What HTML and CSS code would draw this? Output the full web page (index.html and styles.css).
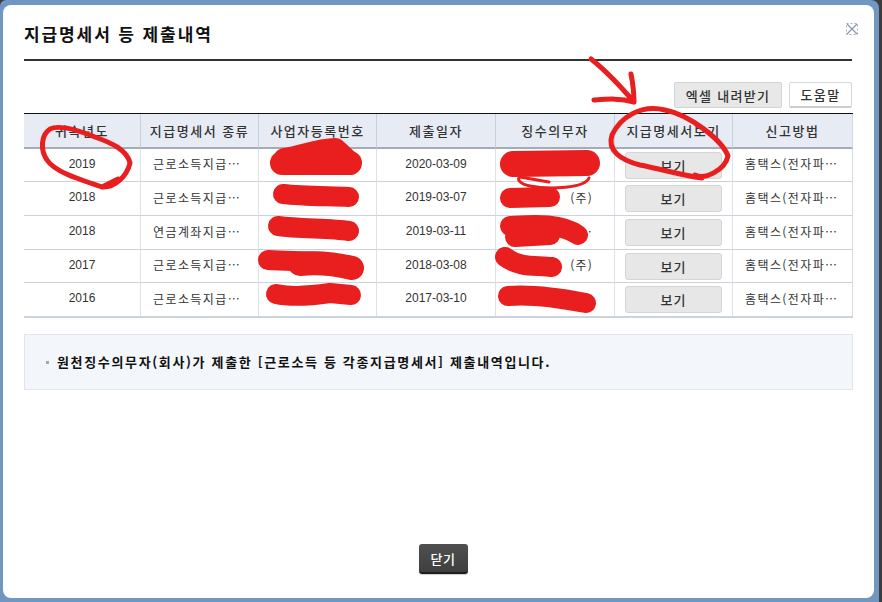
FILE: index.html
```html
<!DOCTYPE html>
<html lang="ko">
<head>
<meta charset="utf-8">
<title>지급명세서 등 제출내역</title>
<link rel="stylesheet" href="styles.css">
</head>
<body>
<div class="frame">
  <div class="modal">
    <header class="head">
      <h1 class="title">지급명세서 등 제출내역</h1>
      <svg class="close-icon" width="12" height="12" viewBox="0 0 12 12" aria-hidden="true">
        <rect class="close-box" x="0.5" y="0.5" width="11" height="11"/>
        <path class="close-x" d="M1 1L11 11M11 1L1 11"/>
      </svg>
    </header>
    <div class="toolbar">
      <button class="btn btn-grey">엑셀 내려받기</button>
      <button class="btn btn-white">도움말</button>
    </div>
    <table class="grid">
      <colgroup>
        <col class="c1"><col class="c2"><col class="c3"><col class="c4"><col class="c5"><col class="c6"><col class="c7">
      </colgroup>
      <thead>
        <tr><th>귀속년도</th><th>지급명세서 종류</th><th>사업자등록번호</th><th>제출일자</th><th>징수의무자</th><th>지급명세서보기</th><th>신고방법</th></tr>
      </thead>
      <tbody>
        <tr class="r33"><td class="num">2019</td><td class="txt">근로소득지급…</td><td></td><td class="num">2020-03-09</td><td></td><td class="act"><button class="view">보기</button></td><td class="txt">홈택스(전자파…</td></tr>
        <tr class="r34"><td class="num">2018</td><td class="txt">근로소득지급…</td><td></td><td class="num">2019-03-07</td><td class="payer">(주)</td><td class="act"><button class="view">보기</button></td><td class="txt">홈택스(전자파…</td></tr>
        <tr class="r34"><td class="num">2018</td><td class="txt">연금계좌지급…</td><td></td><td class="num">2019-03-11</td><td class="payer">…</td><td class="act"><button class="view">보기</button></td><td class="txt">홈택스(전자파…</td></tr>
        <tr class="r33"><td class="num">2017</td><td class="txt">근로소득지급…</td><td></td><td class="num">2018-03-08</td><td class="payer">(주)</td><td class="act"><button class="view">보기</button></td><td class="txt">홈택스(전자파…</td></tr>
        <tr class="r33"><td class="num">2016</td><td class="txt">근로소득지급…</td><td></td><td class="num">2017-03-10</td><td></td><td class="act"><button class="view">보기</button></td><td class="txt">홈택스(전자파…</td></tr>
      </tbody>
    </table>
    <div class="note"><span class="bullet"></span><p class="note-text">원천징수의무자(회사)가 제출한 [근로소득 등 각종지급명세서] 제출내역입니다.</p></div>
    <div class="foot"><button class="closebtn">닫기</button></div>
  </div>
</div>
<svg class="marks" width="882" height="602" viewBox="0 0 882 602" aria-hidden="true">
  <g class="thin">
    <path d="M118 179L102 187C115 188 127 176 130 163C127 150 112 143 95 137C80 131 60 124 50 129C41 135 40 150 47 160C54 171 75 178 102 187"/>
    <path d="M695 175C705 180 725 170 728 156C722 140 690 115 665 110C640 104 620 118 612 135C607 150 620 160 640 165C665 170 680 175 702 178"/>
    <path d="M591 59C605 70 622 88 634 102M631 74C633 84 634 94 634 102C620 98 608 99 594 100"/>
    <path class="hair" d="M549 182L520 177C516 179 520 184 530 186C550 190 585 188 589 178"/>
  </g>
  <g class="blob">
    <path class="w24" d="M282 163L350 163"/>
    <path class="w24" d="M285 160C300 158 318 150 335 150L349 163"/>
    <path class="w20" d="M283 194C300 196 320 196 349 197"/>
    <path class="w20" d="M278 226C300 229 330 228 349 231"/>
    <path class="w20" d="M268 260C285 261 300 261 320 262"/>
    <path class="w24" d="M300 264C320 262 335 264 352 268"/>
    <path class="w20" d="M276 294C290 297 310 296 330 293L351 295"/>
    <path class="w26" d="M513 164L587 163"/>
    <path class="w20" d="M510 198L550 197"/>
    <path class="w20" d="M510 226C530 225 560 222 578 235"/>
    <path class="w20" d="M515 237L550 235"/>
    <path class="w20" d="M505 257C520 268 535 265 552 267"/>
    <path class="w20" d="M508 296C530 294 560 298 586 303"/>
  </g>
</svg>
</body>
</html>
```
FILE: styles.css
```css
* { box-sizing: border-box; }
html, body { margin: 0; height: 100%; }
body {
  background: #3c3c3c;
  font-family: "Noto Sans CJK KR", "Liberation Sans", sans-serif;
  color: #333;
  width: 882px;
  height: 602px;
  overflow: hidden;
  position: relative;
}
.frame {
  width: 879px;
  height: 602px;
  background: #7096c2;
  padding: 5px 5px 4px 3px;
  border-radius: 6px 8px 0 0;
}
.modal {
  height: 593px;
  background: #fff;
  border-radius: 8px;
  padding: 0 22px 0 21px;
  display: flex;
  flex-direction: column;
}
.head {
  height: 56px;
  border-bottom: 2px solid #333;
  position: relative;
  padding-top: 18px;
  flex: none;
}
.title {
  margin: 0;
  font-size: 17px;
  line-height: 22px;
  font-weight: 700;
  letter-spacing: 1.9px;
  color: #111;
}
.close-icon { position: absolute; right: -6px; top: 18px; }
.close-box { fill: none; stroke: #a8adb8; stroke-width: 1; stroke-dasharray: 2 2; }
.close-x { stroke: #8d97ad; stroke-width: 1.3; fill: none; }
.toolbar {
  display: flex;
  justify-content: flex-end;
  gap: 7px;
  margin-top: 21px;
  height: 27px;
  flex: none;
}
.btn {
  font-family: inherit;
  font-size: 13px;
  font-weight: 500;
  letter-spacing: 1.3px;
  color: #333;
  height: 26px;
  padding: 0;
  border-radius: 2px;
  cursor: pointer;
}
.btn-grey { width: 108px; background: #e8e8e8; border: 1px solid #d4d4d4; }
.btn-white { width: 63px; background: #fff; border: 1px solid #d8d8d8; border-bottom: 2px solid #ccc; }
.grid {
  margin-top: 4px;
  width: 829px;
  flex: none;
  border-collapse: separate;
  border-spacing: 0;
  table-layout: fixed;
  border-top: 1px solid #111;
  border-bottom: 2px solid #ccd3de;
}
.c1 { width: 116px; }
.c2, .c3, .c6 { width: 118px; }
.c4, .c5 { width: 119px; }
.c7 { width: 121px; }
.grid th {
  height: 35px;
  padding: 0 0 1px;
  background: #e6ebf4;
  font-size: 13px;
  font-weight: 500;
  letter-spacing: 1.5px;
  color: #333;
  border-left: 1px solid #c8d0dc;
  border-bottom: 2px solid #a6acb5;
}
.grid th:first-child, .grid td:first-child { border-left: 0; }
.grid th:last-child, .grid td:last-child { border-right: 1px solid #d5dae2; }
.grid td {
  padding: 0;
  font-size: 12px;
  color: #333;
  border-left: 1px solid #dde1e8;
  border-bottom: 1px solid #ccd2dc;
  white-space: nowrap;
  overflow: hidden;
}
.grid tbody tr:last-child td { border-bottom: 0; }
.r34 td { height: 34px; }
.r33 td { height: 33px; }
.num { text-align: center; font-family: "Liberation Sans", sans-serif; padding-bottom: 3px !important; }
.txt { padding: 0 0 3px 12px !important; letter-spacing: 1.4px; }
.payer { text-align: right; padding: 0 21px 3px 0 !important; letter-spacing: 1.2px; }
.act { text-align: center; }
.view {
  display: block;
  margin: 0 0 0 10px;
  width: 97px;
  height: 27px;
  padding: 0;
  font-family: inherit;
  font-size: 13px;
  font-weight: 500;
  letter-spacing: 1px;
  color: #333;
  background: #e8e7e8;
  border: 1px solid #d5d5d5;
  border-radius: 3px;
  cursor: pointer;
}
.note {
  margin-top: 16px;
  width: 829px;
  height: 56px;
  flex: none;
  background: #f3f6fb;
  border: 1px solid #e1e6ee;
  display: flex;
  align-items: center;
  padding: 0 0 0 21px;
  gap: 8px;
}
.bullet { width: 3px; height: 3px; background: #a6a6a6; flex: none; }
.note-text {
  margin: 0;
  font-size: 13px;
  line-height: 16px;
  font-weight: 700;
  letter-spacing: 1.65px;
  color: #111;
  white-space: nowrap;
}
.foot {
  margin-top: 154px;
  display: flex;
  justify-content: center;
  flex: none;
  padding-left: 10px;
}
.closebtn {
  width: 49px;
  height: 30px;
  padding: 0;
  font-family: inherit;
  font-size: 13px;
  font-weight: 500;
  letter-spacing: .5px;
  color: #fff;
  background: linear-gradient(#505050, #3f3f3f);
  border: 0;
  border-bottom: 2px solid #1e1e1e;
  border-radius: 3px;
  box-shadow: 0 1px 1px #ccc;
  cursor: pointer;
}
.marks { position: absolute; left: 0; top: 0; pointer-events: none; }
.marks path { fill: none; stroke: #e91e1e; stroke-linecap: round; stroke-linejoin: round; }
.thin path { stroke-width: 5; }
.thin .hair { stroke-width: 3; }
.blob .w20 { stroke-width: 20; }
.blob .w24 { stroke-width: 24; }
.blob .w26 { stroke-width: 26; }
```
